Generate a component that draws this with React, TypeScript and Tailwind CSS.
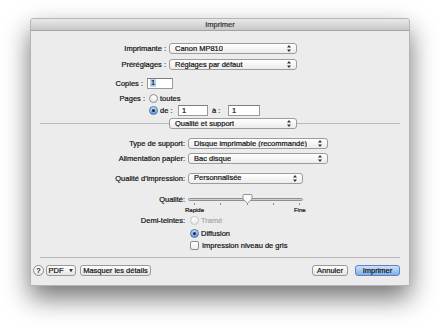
import React from "react";

function Arrows() {
  return (
    <svg width="4" height="7" viewBox="0 0 4 7" className="shrink-0">
      <path d="M2 0 L4 2.6 L0 2.6 Z M0 4.4 L4 4.4 L2 7 Z" fill="#333" />
    </svg>
  );
}

function Popup({ label, className }: { label: string; className: string }) {
  return (
    <div
      className={`flex h-[11px] items-center justify-between rounded-[3px] border border-[#9c9c9c] bg-gradient-to-b from-white to-[#ececec] pl-[5px] pr-[5px] ${className}`}
    >
      <span className="truncate leading-none">{label}</span>
      <Arrows />
    </div>
  );
}

function Radio({ checked, disabled }: { checked?: boolean; disabled?: boolean }) {
  if (checked) {
    return (
      <span className="flex h-[9px] w-[9px] shrink-0 items-center justify-center rounded-full border border-[#4b74b0] bg-gradient-to-b from-[#c4dcf7] to-[#5e9be0]">
        <span className="h-[3px] w-[3px] rounded-full bg-[#1d2a3a]" />
      </span>
    );
  }
  return (
    <span
      className={`h-[9px] w-[9px] shrink-0 rounded-full border bg-gradient-to-b from-white to-[#e8e8e8] ${
        disabled ? "border-[#c4c4c4]" : "border-[#8c8c8c]"
      }`}
    />
  );
}

function Field({ value, className, selected }: { value: string; className: string; selected?: boolean }) {
  return (
    <div
      className={`flex h-[11px] items-center border border-[#9a9a9a] border-t-[#7d7d7d] bg-white pl-[2px] ${className}`}
    >
      <span className={`leading-none ${selected ? "bg-[#b3d3f7] px-[1px]" : "px-[1px]"}`}>{value}</span>
    </div>
  );
}

function Button({ children, className }: { children: React.ReactNode; className: string }) {
  return (
    <div
      className={`flex h-[11px] items-center justify-center rounded-[3px] border border-[#9a9a9a] bg-gradient-to-b from-white to-[#e4e4e4] leading-none ${className}`}
    >
      {children}
    </div>
  );
}

export default function App() {
  const ticks = [6, 32, 59, 85, 111];
  return (
    <div className="h-[328px] w-[440px] overflow-hidden bg-white pl-[30px] pt-[18px] font-['Liberation_Sans',Arial,sans-serif] text-[7.5px] text-[#111] [-webkit-text-stroke:0.2px]">
      <div className="flex h-[268px] w-[380px] flex-col rounded-t-[3px] border border-[#b5b5b5] bg-[#ececec] shadow-[0_12px_26px_rgba(0,0,0,0.55)]">
        {/* Title bar */}
        <div className="flex h-[12px] shrink-0 items-center justify-center rounded-t-[3px] border-b border-[#a3a3a3] bg-gradient-to-b from-[#e9e9e9] to-[#c9c9c9] text-[#333]">
          Imprimer
        </div>

        {/* Printer + presets */}
        <div className="mt-[12px] flex items-center">
          <div className="w-[135px] text-right">Imprimante :</div>
          <Popup label="Canon MP810" className="ml-[3px] w-[128px]" />
        </div>
        <div className="mt-[5px] flex items-center">
          <div className="w-[135px] text-right">Préréglages :</div>
          <Popup label="Réglages par défaut" className="ml-[3px] w-[128px]" />
        </div>

        {/* Copies */}
        <div className="mt-[7px] flex items-center">
          <div className="w-[112px] text-right">Copies :</div>
          <Field value="1" selected className="ml-[4px] w-[26px]" />
        </div>

        {/* Pages */}
        <div className="mt-[5px] flex h-[10px] items-center">
          <div className="w-[114px] text-right">Pages :</div>
          <div className="ml-[4px] flex items-center gap-[2px]">
            <Radio />
            <span>toutes</span>
          </div>
        </div>
        <div className="mt-[1px] flex items-center pl-[118px]">
          <Radio checked />
          <span className="ml-[2px] w-[18px]">de :</span>
          <Field value="1" className="w-[30px]" />
          <span className="ml-[4px] w-[16px]">à :</span>
          <Field value="1" className="w-[32px]" />
        </div>

        {/* Section popup */}
        <div className="mt-[2px] flex items-center pl-[9px]">
          <div className="h-[2px] w-[129px] border-t border-[#b9b9b9] border-b-white" />
          <Popup label="Qualité et support" className="w-[128px]" />
          <div className="h-[2px] w-[103px] border-t border-[#b9b9b9] border-b-white" />
        </div>

        {/* Media options */}
        <div className="mt-[9px] flex items-center">
          <div className="w-[154px] text-right">Type de support:</div>
          <Popup label="Disque imprimable (recommandé)" className="ml-[3px] w-[140px]" />
        </div>
        <div className="mt-[4px] flex items-center">
          <div className="w-[154px] text-right">Alimentation papier:</div>
          <Popup label="Bac disque" className="ml-[3px] w-[140px]" />
        </div>
        <div className="mt-[8px] flex items-center">
          <div className="w-[154px] text-right">Qualité d'impression:</div>
          <Popup label="Personnalisée" className="ml-[3px] w-[115px]" />
        </div>

        {/* Quality slider */}
        <div className="mt-[10px] flex items-start">
          <div className="mt-[1px] w-[154px] text-right leading-[9px]">Qualité:</div>
          <div className="relative ml-[3px] h-[21px] w-[115px]">
            <div className="absolute left-0 right-0 top-[4px] h-[3px] rounded-full border border-[#8f8f8f] bg-gradient-to-b from-[#bdbdbd] to-[#e6e6e6]" />
            {ticks.map((x) => (
              <div key={x} className="absolute top-[9px] h-[2px] w-px bg-[#8a8a8a]" style={{ left: x }} />
            ))}
            <svg width="11" height="10" viewBox="0 0 11 10" className="absolute left-[54px] top-0">
              <path
                d="M1 1.2 Q1 0.5 1.8 0.5 L9.2 0.5 Q10 0.5 10 1.2 L10 5 L5.5 9.3 L1 5 Z"
                fill="#fafafa"
                stroke="#8a8a8a"
                strokeWidth="0.9"
              />
            </svg>
            <span className="absolute left-[-3px] top-[13px] text-[6px] leading-none">Rapide</span>
            <span className="absolute left-[106px] top-[13px] text-[6px] leading-none">Fine</span>
          </div>
        </div>

        {/* Halftones */}
        <div className="mt-[1px] flex h-[10px] items-center">
          <div className="w-[154px] text-right">Demi-teintes:</div>
          <div className="ml-[5px] flex items-center gap-[2px] text-[#a8a8a8]">
            <Radio disabled />
            <span>Tramé</span>
          </div>
        </div>
        <div className="mt-[3px] flex h-[10px] items-center gap-[2px] pl-[159px]">
          <Radio checked />
          <span>Diffusion</span>
        </div>
        <div className="mt-[2px] flex h-[10px] items-center gap-[3px] pl-[159px]">
          <span className="h-[9px] w-[9px] rounded-[2px] border border-[#8c8c8c] bg-gradient-to-b from-white to-[#ececec]" />
          <span>Impression niveau de gris</span>
        </div>

        {/* Bottom bar */}
        <div className="mx-[9px] mt-[6px] h-[2px] border-t border-[#b9b9b9] border-b-white" />
        <div className="mt-[6px] flex items-center pl-[2px] pr-[9px]">
          <span className="flex h-[11px] w-[11px] items-center justify-center rounded-full border border-[#8c8c8c] bg-gradient-to-b from-white to-[#e4e4e4] text-[7px] leading-none">
            ?
          </span>
          <Button className="ml-[2px] w-[30px] gap-[5px]">
            <span>PDF</span>
            <span className="text-[5px]">▼</span>
          </Button>
          <Button className="ml-[4px] w-[71px]">Masquer les détails</Button>
          <div className="flex-1" />
          <Button className="w-[36px]">Annuler</Button>
          <div className="ml-[7px] flex h-[11px] w-[45px] items-center justify-center rounded-[3px] border border-[#5d84c0] bg-gradient-to-b from-[#cfe2f8] to-[#7daeea] leading-none">
            Imprimer
          </div>
        </div>
      </div>
    </div>
  );
}
